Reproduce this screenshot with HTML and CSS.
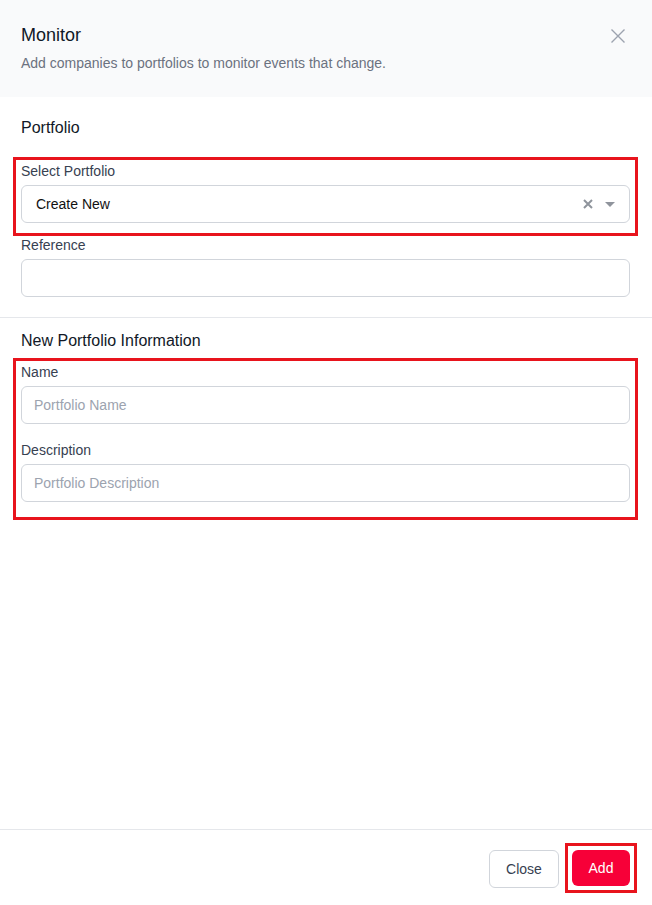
FILE: index.html
```html
<!DOCTYPE html>
<html>
<head>
<meta charset="utf-8">
<link rel="stylesheet" href="styles.css">
</head>
<body>
<div class="modal">
  <header class="head">
    <div class="head-text">
      <h1 class="title">Monitor</h1>
      <p class="subtitle">Add companies to portfolios to monitor events that change.</p>
    </div>
    <button class="close-x" aria-label="close">
      <svg width="16" height="16" viewBox="0 0 16 16"><path d="M1.5 1.5L14.5 14.5M14.5 1.5L1.5 14.5" stroke="#9ca3af" stroke-width="1.4" fill="none"/></svg>
    </button>
  </header>
  <main class="content">
    <section class="sec sec-top">
      <h2 class="sec-title">Portfolio</h2>
      <div class="field field-select">
        <label class="lbl">Select Portfolio</label>
        <div class="select">
          <span class="select-val">Create New</span>
          <span class="select-icons">
            <svg width="12" height="12" viewBox="0 0 12 12"><path d="M2 2L10 10M10 2L2 10" stroke="#8f949c" stroke-width="2" fill="none"/></svg>
            <svg class="caret" width="10" height="6" viewBox="0 0 10 6"><path d="M0 0H10L5 5Z" fill="#8f949c"/></svg>
          </span>
        </div>
      </div>
      <div class="field field-ref">
        <label class="lbl">Reference</label>
        <input class="inp" type="text">
      </div>
    </section>
    <section class="sec sec-new">
      <h2 class="sec-title">New Portfolio Information</h2>
      <div class="field field-name">
        <label class="lbl">Name</label>
        <input class="inp" type="text" placeholder="Portfolio Name">
      </div>
      <div class="field field-desc">
        <label class="lbl">Description</label>
        <input class="inp" type="text" placeholder="Portfolio Description">
      </div>
    </section>
  </main>
  <footer class="foot">
    <button class="btn btn-close">Close</button>
    <button class="btn btn-add">Add</button>
  </footer>
  <div class="mark mark-1"></div>
  <div class="mark mark-2"></div>
  <div class="mark mark-3"></div>
</div>
</body>
</html>
```
FILE: styles.css
```css
* { box-sizing: border-box; }
html, body { margin: 0; padding: 0; }
body {
  font-family: "Liberation Sans", Arial, sans-serif;
  color: #111827;
  background: #fff;
}
.modal {
  position: relative;
  width: 652px;
  height: 905px;
  display: flex;
  flex-direction: column;
  background: #fff;
}
.head {
  background: #f9fafb;
  height: 97px;
  padding: 24px 21px 0 21px;
  display: flex;
  justify-content: space-between;
  align-items: flex-start;
}
.title {
  margin: 0;
  font-size: 18px;
  line-height: 22px;
  font-weight: 400;
  color: #111827;
}
.subtitle {
  margin: 7px 0 0 0;
  font-size: 14px;
  line-height: 20px;
  color: #6b7280;
}
.close-x {
  border: 0;
  background: none;
  padding: 0;
  margin: 4px 5px 0 0;
  width: 16px;
  height: 16px;
  display: flex;
}
.content {
  flex: 1;
}
.sec-top {
  padding: 20px 21px 20px 21px;
  border-bottom: 1px solid #e5e7eb;
}
.sec-new {
  padding: 12px 21px 0 21px;
}
.sec-title {
  margin: 0;
  font-size: 16px;
  line-height: 22px;
  font-weight: 400;
  color: #111827;
}
.field { display: flex; flex-direction: column; }
.field-select { margin-top: 22px; }
.field-ref { margin-top: 12px; }
.field-name { margin-top: 10px; }
.field-desc { margin-top: 16px; }
.lbl {
  font-size: 14px;
  line-height: 20px;
  color: #374151;
  margin-bottom: 4px;
}
.select, .inp {
  width: 609px;
  height: 38px;
  border: 1px solid #d1d5db;
  border-radius: 6px;
  background: #fff;
}
.select {
  display: flex;
  align-items: center;
  justify-content: space-between;
  padding: 0 14px 0 14px;
}
.select-val {
  font-size: 14px;
  color: #111;
}
.select-icons {
  display: flex;
  align-items: center;
  gap: 11px;
}
.caret { margin-top: 1px; }
.inp {
  display: block;
  padding: 0 12px;
  font-family: "Liberation Sans", Arial, sans-serif;
  font-size: 14px;
  color: #111827;
  outline: none;
}
.inp::placeholder { color: #9ca3af; }
.foot {
  height: 76px;
  border-top: 1px solid #e5e7eb;
  display: flex;
  justify-content: flex-end;
  align-items: flex-start;
  gap: 13px;
  padding: 20px 22px 0 0;
}
.btn {
  height: 38px;
  border-radius: 6px;
  font-family: "Liberation Sans", Arial, sans-serif;
  font-size: 14px;
  padding: 0;
}
.btn-close {
  width: 70px;
  background: #fff;
  border: 1px solid #d1d5db;
  color: #374151;
}
.btn-add {
  width: 58px;
  height: 36px;
  background: #f70038;
  border: 0;
  color: #fff;
  font-weight: 500;
}
.mark {
  position: absolute;
  border: 3px solid #e8141d;
  pointer-events: none;
}
.mark-1 { left: 13px; top: 157px; width: 625px; height: 79px; }
.mark-2 { left: 13px; top: 358px; width: 625px; height: 162px; }
.mark-3 { left: 565px; top: 843px; width: 72px; height: 50px; }
```
